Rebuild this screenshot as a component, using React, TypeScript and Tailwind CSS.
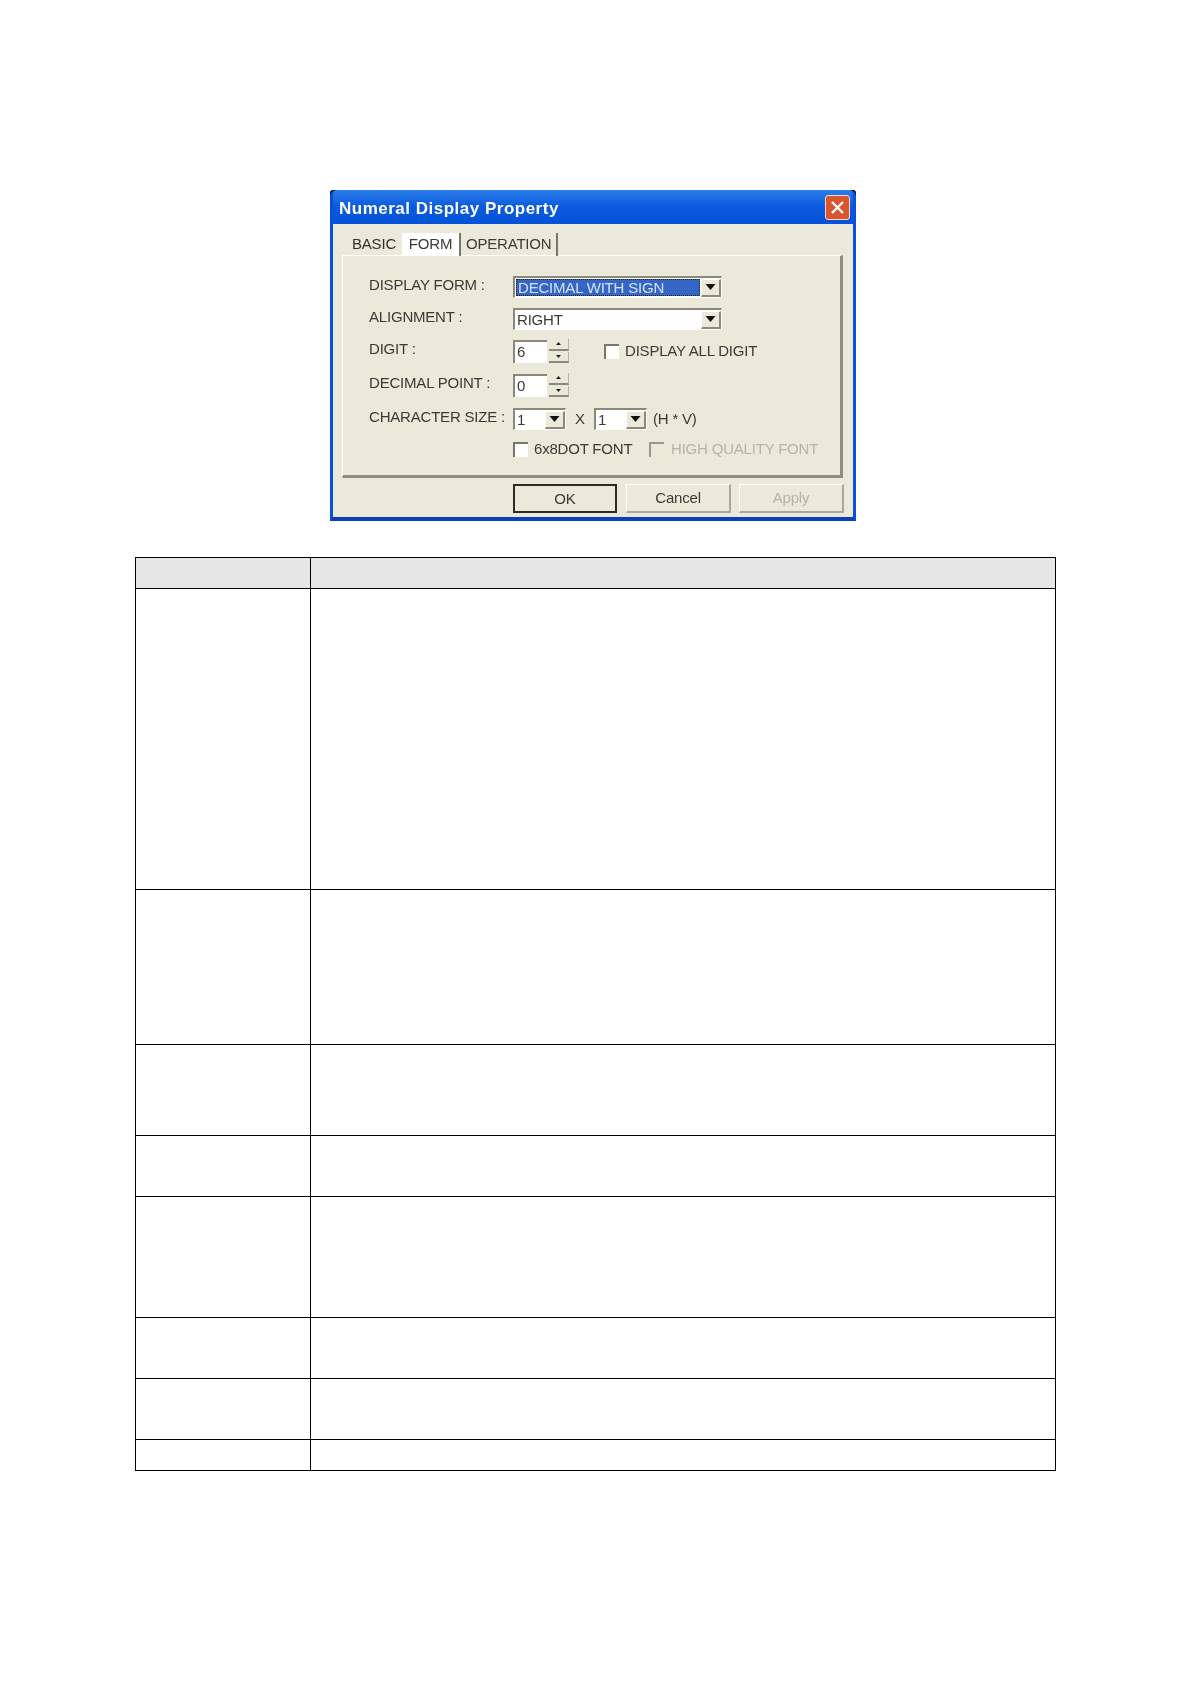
const labelCls = 'w-[144px] whitespace-nowrap pb-[6px] text-[#3a3a36]';

function Arrow() {
  return (
    <div className="flex h-[18px] w-[20px] shrink-0 items-center justify-center border-t border-l border-r-2 border-b-2 border-t-white border-l-white border-r-[#8a897c] border-b-[#8a897c] bg-[#ece9d8]">
      <svg width="11" height="6" viewBox="0 0 11 6">
        <path d="M0.5 0 H10.5 L5.5 6 Z" fill="#111" />
      </svg>
    </div>
  );
}

function Select({ width, children, active }: { width: string; children: string; active?: boolean }) {
  return (
    <div className={`${width} flex h-[22px] items-center justify-between border-t-2 border-l-2 border-r border-b border-t-[#8a897c] border-l-[#8a897c] border-r-white border-b-white bg-white`}>
      {active ? (
        <div className="mx-[1px] flex h-[17px] flex-1 items-center border border-dotted border-[#222] bg-[#3566c6] pb-[1px] pl-[1px] text-[#d6e2fb]">{children}</div>
      ) : (
        <div className="flex-1 pb-[1px] pl-[2px]">{children}</div>
      )}
      <Arrow />
    </div>
  );
}

function Spin({ value }: { value: string }) {
  return (
    <div className="flex items-center gap-[2px]">
      <div className="flex h-[23px] w-[34px] items-center border-t-2 border-l-2 border-t-[#8a897c] border-l-[#8a897c] bg-white pb-[1px] pl-[2px]">{value}</div>
      <div className="flex h-[24px] w-[20px] flex-col gap-[1px]">
        <div className="flex flex-1 items-center justify-center border-r border-b-2 border-r-[#b5b4a8] border-b-[#8a897c]">
          <svg width="5" height="3" viewBox="0 0 5 3"><path d="M2.5 0 L5 3 H0 Z" fill="#222" /></svg>
        </div>
        <div className="flex flex-1 items-center justify-center border-r border-b-2 border-r-[#b5b4a8] border-b-[#8a897c]">
          <svg width="5" height="3" viewBox="0 0 5 3"><path d="M0 0 H5 L2.5 3 Z" fill="#222" /></svg>
        </div>
      </div>
    </div>
  );
}

function Check({ disabled }: { disabled?: boolean }) {
  return (
    <div className={`h-[15px] w-[15px] shrink-0 border-t-2 border-l-2 ${disabled ? 'border-t-[#9a9a8c] border-l-[#9a9a8c] bg-[#ece9d8]' : 'border-t-[#77776b] border-l-[#77776b] bg-white'}`} />
  );
}

const rows = [
  { h: 'h-[301px]' },
  { h: 'h-[155px]' },
  { h: 'h-[91px]' },
  { h: 'h-[61px]' },
  { h: 'h-[121px]' },
  { h: 'h-[61px]' },
  { h: 'h-[61px]' },
  { h: 'h-[31px]' },
];

export default function App() {
  return (
    <div className="min-h-[1684px] bg-white pt-[190px] font-['Liberation_Sans',Arial,sans-serif]">
      {/* Dialog */}
      <div className="ml-[330px] w-[526px] rounded-t-[3px] bg-black text-[15px] leading-none tracking-[-0.2px] blur-[0.35px]">
        <div className="overflow-hidden rounded-t-[6px] border-x-[3px] border-b-[4px] border-x-[#0a50d8] border-b-[#0a3fc0] bg-[#0a56dc]">
          <div className="flex h-[34px] items-center justify-between bg-gradient-to-b from-[#2a7ce8] via-[#0a5ade] to-[#0552d8] pr-[3px] pl-[6px]">
            <span className="pt-[2px] text-[17px] font-bold tracking-[0.5px] text-white">Numeral Display Property</span>
            <div className="flex h-[25px] w-[25px] items-center justify-center rounded-[3px] border border-[#f3d8cc] bg-[#d9552e]">
              <svg width="15" height="15" viewBox="0 0 15 15">
                <path d="M2 2 L13 13 M13 2 L2 13" stroke="#fff" strokeWidth="2.4" />
              </svg>
            </div>
          </div>

          <div className="bg-[#ebe9da] px-[9px] pt-[9px] pb-[4px] text-[#3a3a36]">
            {/* Tabs */}
            <div className="flex h-[22px] items-center pl-[9px]">
              <div className="w-[51px] pb-[2px] pl-[1px] text-[#2f2f2c]">BASIC</div>
              <div className="flex h-[23px] w-[59px] items-center justify-center border-r-2 border-r-[#77776b] bg-white pb-[2px]">FORM</div>
              <div className="flex h-[23px] w-[97px] items-center border-r-2 border-r-[#77776b] pb-[2px] pl-[5px]">OPERATION</div>
            </div>

            {/* Panel */}
            <div className="h-[223px] w-[501px] border-t border-l border-r-[3px] border-b-[3px] border-t-white border-l-white border-r-[#8f8e81] border-b-[#8f8e81] pt-[20px] pl-[26px]">
              <div className="flex h-[22px] items-center">
                <div className={labelCls}>DISPLAY FORM :</div>
                <Select width="w-[209px]" active>DECIMAL WITH SIGN</Select>
              </div>
              <div className="mt-[10px] flex h-[22px] items-center">
                <div className={labelCls}>ALIGNMENT :</div>
                <Select width="w-[209px]">RIGHT</Select>
              </div>
              <div className="mt-[9px] flex h-[24px] items-center">
                <div className={labelCls}>DIGIT :</div>
                <Spin value="6" />
                <div className="ml-[35px] flex items-center gap-[6px]">
                  <Check />
                  <span className="pb-[2px]">DISPLAY ALL DIGIT</span>
                </div>
              </div>
              <div className="mt-[10px] flex h-[24px] items-center">
                <div className={labelCls}>DECIMAL POINT :</div>
                <Spin value="0" />
              </div>
              <div className="mt-[11px] flex h-[22px] items-center">
                <div className={labelCls}>CHARACTER SIZE :</div>
                <Select width="w-[53px]">1</Select>
                <span className="ml-[9px] w-[19px] pb-[1px]">X</span>
                <Select width="w-[53px]">1</Select>
                <span className="ml-[6px] pb-[2px]">(H * V)</span>
              </div>
              <div className="mt-[10px] flex h-[18px] items-center pl-[144px]">
                <Check />
                <span className="ml-[6px] w-[115px] pb-[2px]">6x8DOT FONT</span>
                <Check disabled />
                <span className="ml-[7px] pb-[2px] text-[#b5b4a8]">HIGH QUALITY FONT</span>
              </div>
            </div>

            {/* Buttons */}
            <div className="mt-[6px] flex h-[29px] pl-[171px]">
              <div className="flex w-[105px] items-center justify-center border-2 border-[#2b2b28] pb-[1px]">OK</div>
              <div className="ml-[9px] flex w-[106px] items-center justify-center border border-r-2 border-b-2 border-t-white border-r-[#a9a89a] border-b-[#a9a89a] border-l-white pb-[1px]">Cancel</div>
              <div className="ml-[8px] flex w-[106px] items-center justify-center border border-r-2 border-b-2 border-t-white border-r-[#a9a89a] border-b-[#a9a89a] border-l-white pb-[1px] text-[#b5b4a8]">Apply</div>
            </div>
          </div>
        </div>
      </div>

      {/* Table */}
      <table className="mt-[36px] ml-[135px] w-[921px] table-fixed border-collapse border border-black">
        <thead>
          <tr className="h-[31px] bg-[#e6e6e6]">
            <th className="w-[175px] border border-black" />
            <th className="border border-black" />
          </tr>
        </thead>
        <tbody>
          {rows.map((r, i) => (
            <tr key={i} className={r.h}>
              <td className="border border-black" />
              <td className="border border-black" />
            </tr>
          ))}
        </tbody>
      </table>
    </div>
  );
}
